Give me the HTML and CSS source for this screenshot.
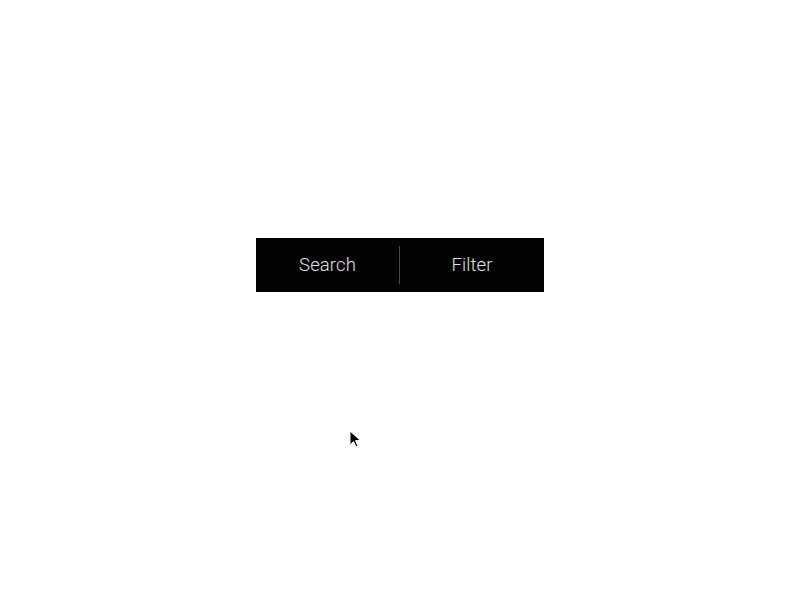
FILE: index.html
```html
<!DOCTYPE html>
<html>
<head>
<meta charset="utf-8">
<link rel="stylesheet" href="styles.css">
</head>
<body>
<div class="toolbar">
  <button class="tab tab-left">Search</button>
  <span class="divider"></span>
  <button class="tab tab-right">Filter</button>
</div>
<svg class="cursor" width="14" height="20" viewBox="0 0 14 20">
  <path d="M1 1 L1 15 L4.5 11.5 L7 17 L9 16 L6.6 10.6 L11.5 10.6 Z" fill="#000" stroke="#fff" stroke-width="1"/>
</svg>
</body>
</html>
```
FILE: styles.css
```css
html, body {
  margin: 0;
  padding: 0;
  background: #fff;
  width: 800px;
  height: 600px;
  position: relative;
  overflow: hidden;
}
.toolbar {
  display: flex;
  align-items: center;
  width: 288px;
  height: 54px;
  margin: 238px 0 0 256px;
  background: #030303;
}
.tab {
  height: 54px;
  border: 0;
  padding: 0 0 1px 0;
  background: transparent;
  color: #e2e2e2;
  font-family: Roboto, "Liberation Sans", sans-serif;
  font-weight: 300;
  font-size: 18.5px;
  letter-spacing: 0.1px;
  cursor: default;
}
.tab-left { width: 143px; }
.tab-right { width: 144px; }
.divider {
  width: 1px;
  height: 38px;
  background: #4a4a4a;
}
.cursor {
  position: absolute;
  left: 349px;
  top: 430px;
}
```
